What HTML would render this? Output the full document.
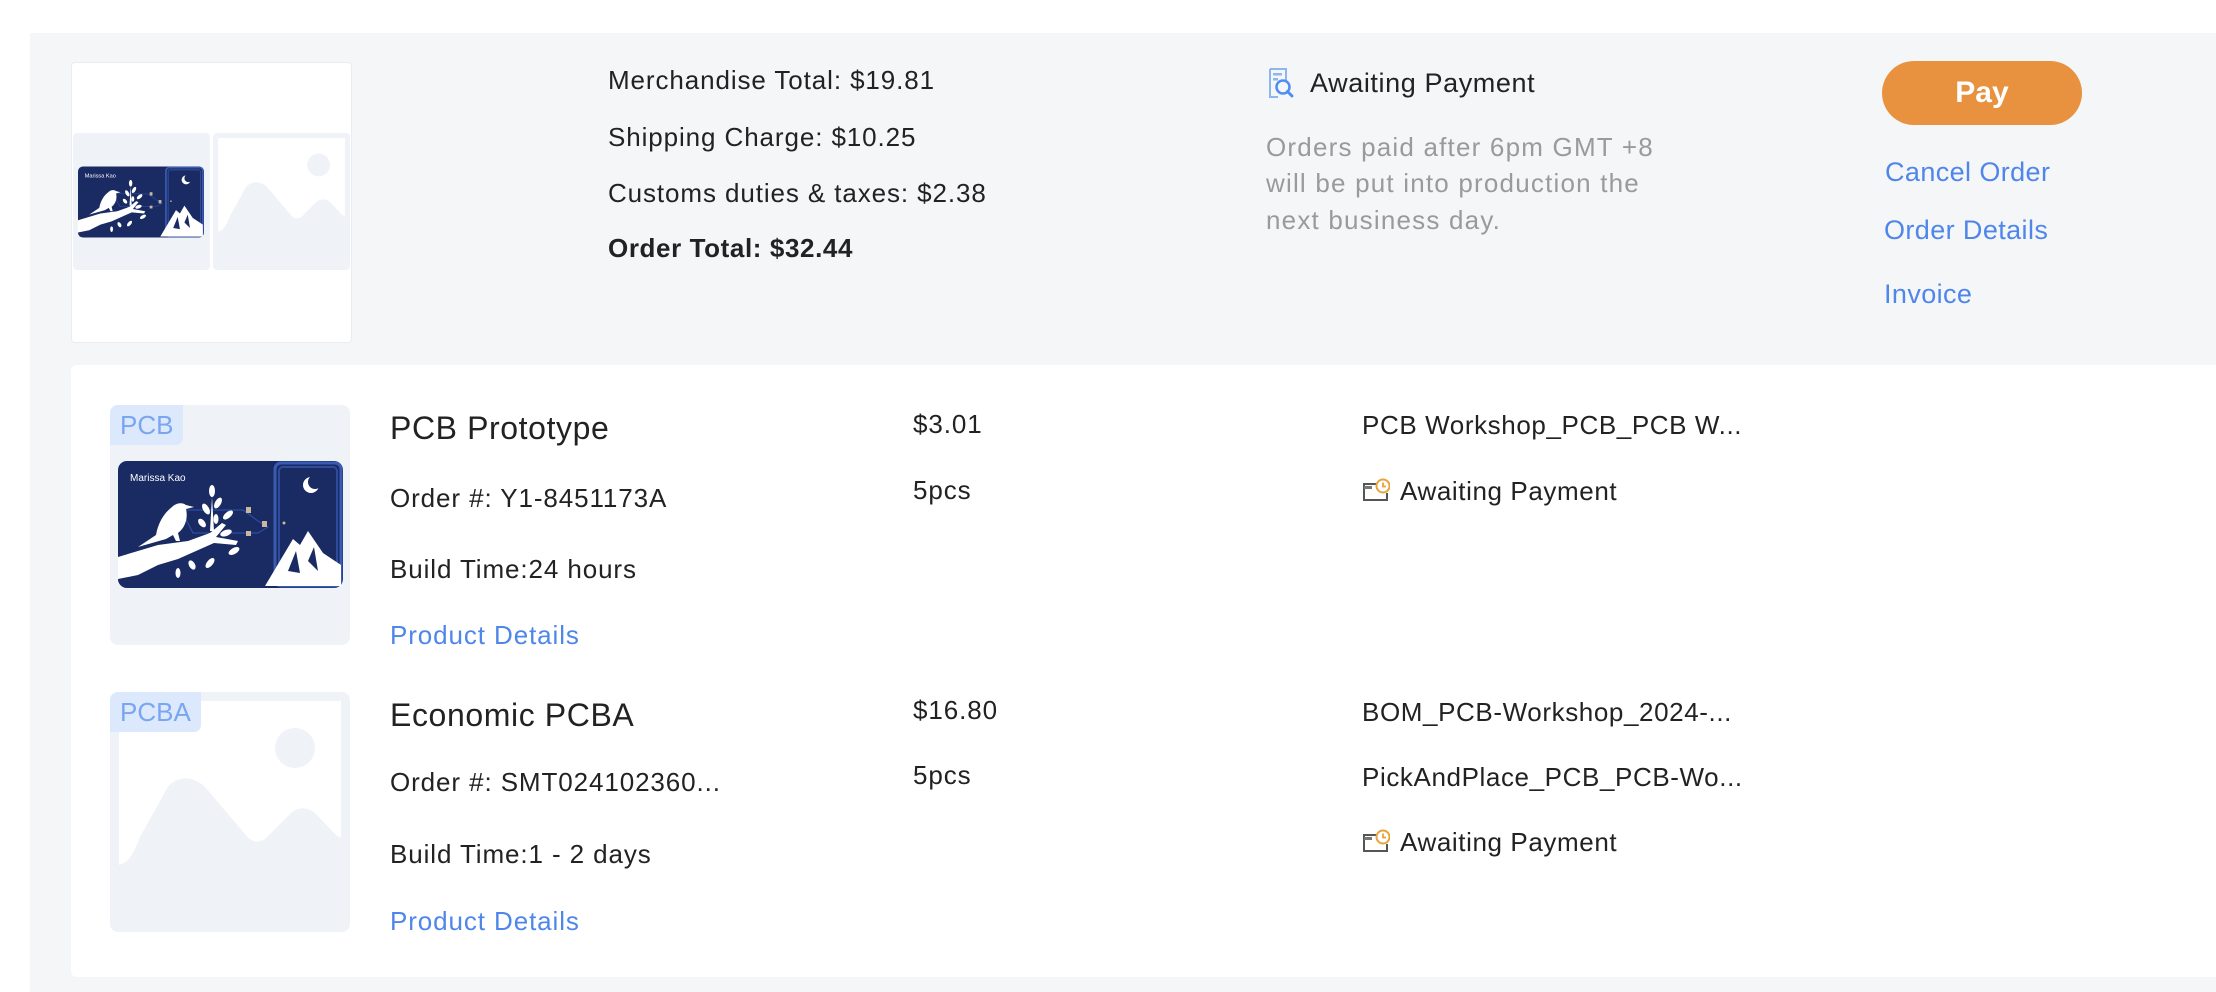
<!DOCTYPE html>
<html><head><meta charset="utf-8">
<style>
*{margin:0;padding:0;box-sizing:border-box}
html,body{width:2216px;height:992px;overflow:hidden;background:#fff;font-family:"Liberation Sans",sans-serif;color:#222}
.a{position:absolute;white-space:nowrap;line-height:40px;height:40px}
.t{font-size:26px;letter-spacing:0.9px}
.blue{color:#4f86ea}
.gray{color:#9a9a9a}
.tile{position:absolute;background:#eff2f7;border-radius:8px;overflow:hidden}
.tag{position:absolute;left:0;top:0;height:40px;line-height:40px;background:#dce8fc;color:#7aa5f0;font-size:26px;padding:0 10px;border-bottom-right-radius:7px}
</style></head><body>
<svg width="0" height="0" style="position:absolute">
<defs>
<symbol id="card" viewBox="0 0 225 127">
<rect x="0" y="0" width="225" height="127" rx="9" fill="#1a2a63"/>
<rect x="157" y="2" width="66" height="123" rx="6" fill="none" stroke="#3a5bb0" stroke-width="3"/>
<rect x="161" y="6" width="58" height="116" rx="4" fill="none" stroke="#2e4c9c" stroke-width="2"/>
<text x="12" y="20" font-family="Liberation Sans,sans-serif" font-size="10" fill="#fff">Marissa Kao</text>
<circle cx="193" cy="24" r="8" fill="#fff"/><circle cx="197" cy="21" r="7" fill="#1a2a63"/>
<path d="M63 49 L125 49 L140 60 L150 66 L140 72 L130 72 L75 72 Z" fill="none" stroke="#2f56b0" stroke-width="1"/>
<rect x="128" y="46" width="5" height="6" fill="#c9b89a"/><rect x="144" y="60" width="5" height="6" fill="#c9b89a"/><rect x="128" y="70" width="5" height="5" fill="#c9b89a"/><circle cx="166" cy="62" r="1.5" fill="#c9b89a"/>
<!-- bird -->
<path d="M20 86 L38 74 C40 62 46 52 54 46 C58 42 64 41 68 44 L76 46 L68 48 C70 56 68 66 60 72 L62 80 L58 80 L55 74 L48 78 Z" fill="#fff"/>
<!-- branch -->
<path d="M0 96 L40 84 L70 80 L92 72 L104 62 L108 64 L98 76 L120 80 L118 84 L96 82 L78 90 L60 98 L40 104 L20 114 L0 118 Z" fill="#fff"/>
<g fill="#fff">
<ellipse cx="94" cy="30" rx="3" ry="6"/><ellipse cx="100" cy="42" rx="3" ry="6" transform="rotate(30 100 42)"/><ellipse cx="88" cy="48" rx="3" ry="6" transform="rotate(-30 88 48)"/>
<ellipse cx="110" cy="54" rx="3" ry="6" transform="rotate(50 110 54)"/><ellipse cx="84" cy="62" rx="3" ry="5" transform="rotate(-40 84 62)"/>
<ellipse cx="108" cy="72" rx="3" ry="6" transform="rotate(70 108 72)"/><ellipse cx="116" cy="90" rx="3" ry="6" transform="rotate(60 116 90)"/>
<ellipse cx="74" cy="104" rx="3" ry="5" transform="rotate(-30 74 104)"/><ellipse cx="92" cy="102" rx="3" ry="6" transform="rotate(40 92 102)"/>
<ellipse cx="60" cy="112" rx="2.5" ry="5"/><ellipse cx="98" cy="58" rx="2.5" ry="5"/>
<path d="M94 36 L96 70 L92 70 Z"/>
</g>
<path d="M147 125 L175 78 L182 84 L190 70 L205 92 L223 104 L223 125 Z" fill="#fff"/>
<path d="M170 110 L178 90 L182 112 Z M190 100 L196 86 L200 110 Z" fill="#1a2a63"/>
</symbol>
<symbol id="ph" viewBox="0 0 240 240">
<rect x="9" y="9" width="222" height="231" fill="#fff"/>
<circle cx="185" cy="56" r="20" fill="#eff2f7"/>
<path d="M9 173 C20 170 24 160 30 145 L55 100 C62 84 82 82 95 95 L135 142 C142 152 152 152 160 142 L180 122 C186 115 198 114 206 122 L225 142 C228 145 231 145 231 145 L231 240 L9 240 Z" fill="#eff2f7"/>
</symbol>
<symbol id="wallet" viewBox="0 0 28 24">
<path d="M15 6 H2 V22 H25 V15" fill="none" stroke="#555" stroke-width="2"/>
<rect x="2" y="8" width="8" height="3" fill="#777"/>
<circle cx="21" cy="8" r="6.5" fill="#fff" stroke="#e8a33a" stroke-width="2"/>
<path d="M21 4.5 V8.5 H24" fill="none" stroke="#e8a33a" stroke-width="1.8"/>
</symbol>
</defs></svg>

<div style="position:absolute;left:0;top:33px;width:2216px;height:959px;background:#f5f6f8"></div>
<div style="position:absolute;left:0;top:33px;width:30px;height:959px;background:#fff"></div>

<div style="position:absolute;left:71px;top:62px;width:281px;height:281px;background:#fff;border:1px solid #e9ecf0;border-radius:4px"></div>
<div class="tile" style="left:73px;top:133px;width:137px;height:137px;border-radius:4px">
<svg style="position:absolute;left:5px;top:33px" width="126" height="72"><use href="#card"/></svg>
</div>
<div class="tile" style="left:213px;top:133px;width:137px;height:137px;border-radius:4px">
<svg style="position:absolute;left:0;top:0" width="137" height="137"><use href="#ph"/></svg>
</div>

<div class="a t" style="left:608px;top:60px">Merchandise Total: $19.81</div>
<div class="a t" style="left:608px;top:117px">Shipping Charge: $10.25</div>
<div class="a t" style="left:608px;top:173px">Customs duties &amp; taxes: $2.38</div>
<div class="a t" style="left:608px;top:228px;font-weight:bold;letter-spacing:0.6px">Order Total: $32.44</div>

<svg style="position:absolute;left:1268px;top:67px" width="26" height="32" viewBox="0 0 26 32">
<path d="M2 2 H18 V14" fill="none" stroke="#8fb4f2" stroke-width="2"/><path d="M2 2 V30 H10" fill="none" stroke="#8fb4f2" stroke-width="2"/>
<rect x="5" y="6" width="9" height="2.5" fill="#8fb4f2"/><rect x="5" y="11" width="5" height="2.5" fill="#8fb4f2"/>
<circle cx="15" cy="20" r="6.5" fill="none" stroke="#4f8ef0" stroke-width="2.5"/><path d="M19.5 24.5 L24 29" stroke="#4f8ef0" stroke-width="3" stroke-linecap="round"/>
</svg>
<div class="a t" style="left:1310px;top:63px;font-size:27px;letter-spacing:0.6px">Awaiting Payment</div>
<div class="a t gray" style="left:1266px;top:127px;letter-spacing:1.2px">Orders paid after 6pm GMT +8</div>
<div class="a t gray" style="left:1266px;top:163px;letter-spacing:1.2px">will be put into production the</div>
<div class="a t gray" style="left:1266px;top:200px;letter-spacing:1.2px">next business day.</div>

<div style="position:absolute;left:1882px;top:61px;width:200px;height:64px;border-radius:32px;background:#e8923f;color:#fff;font-weight:bold;font-size:30px;line-height:64px;text-align:center">Pay</div>
<div class="a t blue" style="left:1885px;top:152px;font-size:27px;letter-spacing:0.4px">Cancel Order</div>
<div class="a t blue" style="left:1884px;top:210px;font-size:27px;letter-spacing:0.4px">Order Details</div>
<div class="a t blue" style="left:1884px;top:274px;font-size:27px;letter-spacing:0.4px">Invoice</div>

<div style="position:absolute;left:71px;top:365px;width:2145px;height:612px;background:#fff;border-radius:6px 0 0 6px"></div>

<div class="tile" style="left:110px;top:405px;width:240px;height:240px">
<svg style="position:absolute;left:8px;top:56px" width="225" height="127"><use href="#card"/></svg>
<div class="tag">PCB</div>
</div>
<div class="a" style="left:390px;top:408px;font-size:32px;letter-spacing:0.6px">PCB Prototype</div>
<div class="a t" style="left:390px;top:478px">Order #: Y1-8451173A</div>
<div class="a t" style="left:390px;top:549px">Build Time:24 hours</div>
<div class="a t blue" style="left:390px;top:615px">Product Details</div>
<div class="a t" style="left:913px;top:404px">$3.01</div>
<div class="a t" style="left:913px;top:470px">5pcs</div>
<div class="a t" style="left:1362px;top:405px;letter-spacing:0.6px">PCB Workshop_PCB_PCB W...</div>
<svg style="position:absolute;left:1362px;top:478px" width="28" height="24"><use href="#wallet"/></svg>
<div class="a t" style="left:1400px;top:471px;letter-spacing:0.6px">Awaiting Payment</div>

<div class="tile" style="left:110px;top:692px;width:240px;height:240px">
<svg style="position:absolute;left:0;top:0" width="240" height="240"><use href="#ph"/></svg>
<div class="tag">PCBA</div>
</div>
<div class="a" style="left:390px;top:695px;font-size:32px;letter-spacing:0.6px">Economic PCBA</div>
<div class="a t" style="left:390px;top:762px">Order #: SMT024102360...</div>
<div class="a t" style="left:390px;top:834px">Build Time:1 - 2 days</div>
<div class="a t blue" style="left:390px;top:901px">Product Details</div>
<div class="a t" style="left:913px;top:690px">$16.80</div>
<div class="a t" style="left:913px;top:755px">5pcs</div>
<div class="a t" style="left:1362px;top:692px;letter-spacing:0.6px">BOM_PCB-Workshop_2024-...</div>
<div class="a t" style="left:1362px;top:757px;letter-spacing:0.6px">PickAndPlace_PCB_PCB-Wo...</div>
<svg style="position:absolute;left:1362px;top:829px" width="28" height="24"><use href="#wallet"/></svg>
<div class="a t" style="left:1400px;top:822px;letter-spacing:0.6px">Awaiting Payment</div>
</body></html>
